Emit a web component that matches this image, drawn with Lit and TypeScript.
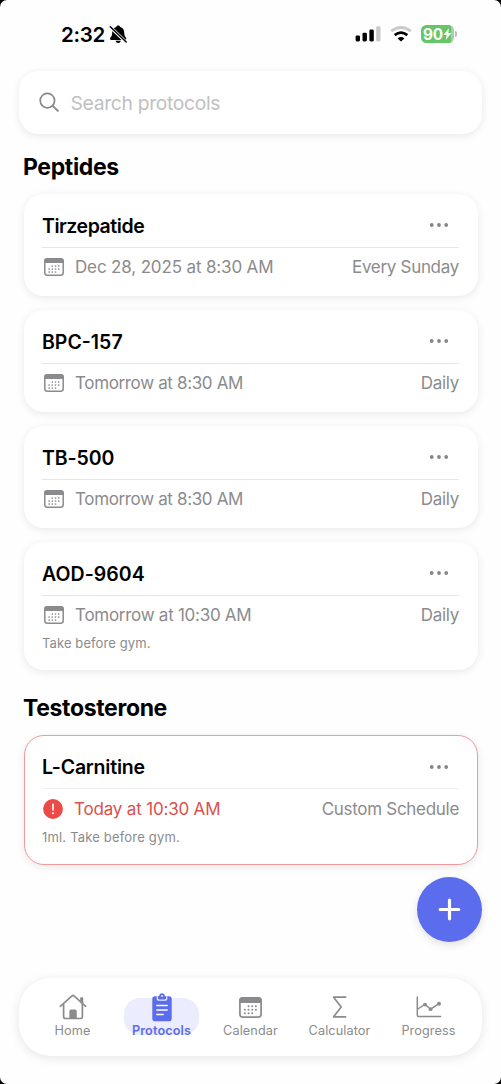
import { LitElement, html, svg, css, nothing } from "lit";
import { customElement, property } from "lit/decorators.js";
import { styleMap } from "lit/directives/style-map.js";

type Protocol = {
  name: string;
  when: string;
  repeat: string;
  note?: string;
  overdue?: boolean;
  // Letter tracking in px for the name and the date.
  tracking: [number, number];
};

const sections: { title: string; items: Protocol[] }[] = [
  {
    title: "Peptides",
    items: [
      { name: "Tirzepatide", when: "Dec 28, 2025 at 8:30 AM", repeat: "Every Sunday", tracking: [-0.45, -0.15] },
      { name: "BPC-157", when: "Tomorrow at 8:30 AM", repeat: "Daily", tracking: [0, -0.35] },
      { name: "TB-500", when: "Tomorrow at 8:30 AM", repeat: "Daily", tracking: [-0.1, -0.35] },
      { name: "AOD-9604", when: "Tomorrow at 10:30 AM", repeat: "Daily", note: "Take before gym.", tracking: [0.05, -0.27] },
    ],
  },
  {
    title: "Testosterone",
    items: [
      {
        name: "L-Carnitine",
        when: "Today at 10:30 AM",
        repeat: "Custom Schedule",
        note: "1ml. Take before gym.",
        overdue: true,
        tracking: [-0.2, -0.18],
      },
    ],
  },
];

const calendarDots = [
  [8.3, 8], [11.5, 8], [14.7, 8],
  [5.1, 11], [8.3, 11], [11.5, 11], [14.7, 11],
  [5.1, 14], [8.3, 14], [11.5, 14],
];

const calendarIcon = (width: number, height: number) => html`
  <svg width=${width} height=${height} viewBox="0 0 20 18" preserveAspectRatio="none" fill="none">
    <rect x="0.8" y="0.8" width="18.4" height="16.4" rx="2.4" stroke="currentColor" stroke-width="1.5" />
    <path d="M0.3 5.1V3A2.8 2.8 0 0 1 3.1 0.2H16.9A2.8 2.8 0 0 1 19.7 3V5.1Z" fill="currentColor" />
    ${calendarDots.map(([x, y]) => svg`<circle cx=${x} cy=${y} r="0.85" fill="currentColor" />`)}
  </svg>
`;

const alertIcon = html`
  <svg width="20" height="20" viewBox="0 0 20 20">
    <circle cx="10" cy="10" r="9.9" fill="#ea4a48" />
    <path d="M10 5.4V10.9" stroke="#fff" stroke-width="1.6" stroke-linecap="round" />
    <circle cx="10" cy="14.2" r="1" fill="#fff" />
  </svg>
`;

const homeIcon = html`
  <svg width="28" height="26" viewBox="0 0 28 26" fill="none" stroke="currentColor" stroke-width="1.7" stroke-linecap="round" stroke-linejoin="round">
    <path d="M1.3 12.3L13 1.9Q14 1.1 15 1.9L26.7 12.3" />
    <path d="M4.6 10.2V22.4Q4.6 24.5 6.7 24.5H21.3Q23.4 24.5 23.4 22.4V10.2" />
    <path d="M22 7.6V4H23.4V8.8" />
    <path d="M11.2 24V17.2Q11.2 16.4 12 16.4H16.1Q16.9 16.4 16.9 17.2V24Z" fill="currentColor" />
  </svg>
`;

const clipboardIcon = html`
  <svg width="20" height="29" viewBox="0 0 20 29" fill="none">
    <path d="M3 3.2H17Q19.7 3.2 19.7 5.9V25.4Q19.7 28.2 17 28.2H3Q0.3 28.2 0.3 25.4V5.9Q0.3 3.2 3 3.2Z" fill="#5b6cec" />
    <path d="M4.7 3.2V6.1Q4.7 7.7 6.3 7.7H13.7Q15.3 7.7 15.3 6.1V3.2Z" fill="#ebecfd" />
    <path d="M5.9 3.3H7.1Q7.4 0.3 10 0.3T12.9 3.3H14.1V5.3Q14.1 6.4 13 6.4H7Q5.9 6.4 5.9 5.3Z" fill="#5b6cec" />
    <circle cx="10" cy="2.9" r="1" fill="#ebecfd" />
    <path d="M4.8 12.6H15.2M4.8 17.1H15.2M4.8 21.4H11.2" stroke="#fff" stroke-width="1.5" stroke-linecap="round" />
  </svg>
`;

const sigmaIcon = html`
  <svg width="15" height="22" viewBox="0 0 15 22" fill="none" stroke="currentColor" stroke-width="1.7" stroke-linecap="round" stroke-linejoin="round">
    <path d="M13.6 1.2H1.6L9.2 11L1.6 20.8H13.6" />
  </svg>
`;

const chartIcon = html`
  <svg width="26" height="22" viewBox="0 0 26 22" fill="none" stroke="currentColor" stroke-linecap="round" stroke-linejoin="round">
    <path d="M1.3 1V19.2Q1.3 20.6 2.7 20.6H24.6" stroke-width="1.5" />
    <path d="M1.8 13L9 8.4L14.6 13.2L23.1 7.6" stroke-width="1.4" />
    <g fill="currentColor" stroke="none">
      <circle cx="9" cy="8.6" r="1.9" />
      <circle cx="14.6" cy="13.2" r="1.9" />
      <circle cx="23" cy="7.7" r="2" />
    </g>
  </svg>
`;

const tabs = [
  { label: "Home", icon: homeIcon, active: false },
  { label: "Protocols", icon: clipboardIcon, active: true },
  { label: "Calendar", icon: calendarIcon(23, 21), active: false },
  { label: "Calculator", icon: sigmaIcon, active: false },
  { label: "Progress", icon: chartIcon, active: false },
];

@customElement("status-bar")
class StatusBar extends LitElement {
  static styles = css`
    :host {
      display: flex;
      align-items: center;
      height: 68px;
      padding: 0 44px 0 61px;
    }
    svg { display: block; flex: none; }
    .time { font-size: 20.5px; font-weight: 600; letter-spacing: -0.25px; width: 47.5px; white-space: nowrap; }
    .levels { display: flex; align-items: center; margin-left: auto; }
    .wifi { margin: 0 9px 0 9px; }
    .battery {
      display: flex;
      align-items: center;
      justify-content: center;
      width: 33px;
      height: 18px;
      border-radius: 5.5px;
      background: linear-gradient(90deg, #66c566 90%, #a5cfa6 90%);
      color: #fff;
      font-size: 15.3px;
      font-weight: 700;
    }
    .tip { width: 2px; height: 6px; border-radius: 0 2px 2px 0; background: #b9b9bb; margin-left: 1px; }
  `;
  render() {
    return html`
      <span class="time">2:32</span>
      <svg width="19" height="19" viewBox="0 0 19 19">
        <path d="M9.2 0.5C10.3 0.5 11 1.2 11.1 2.1C13.9 2.9 15.1 5 15.2 7.5C15.3 10.4 15.8 11.4 17 12.7C17.7 13.7 17.2 14.9 16.1 14.9H2.2C1.1 14.9 0.7 13.6 1.4 12.7C2.6 11.4 3.1 10.4 3.2 7.5C3.3 5 4.5 2.9 7.3 2.1C7.4 1.2 8.1 0.5 9.2 0.5Z" fill="#000" />
        <path d="M6.5 15.8H11.8C11.4 17.3 10.5 18 9.2 18S6.9 17.3 6.5 15.8Z" fill="#000" />
        <path d="M0.9 1.7L17 17.2" stroke="#fff" stroke-width="3.2" />
        <path d="M1.3 1.7L17.2 17" stroke="#000" stroke-width="1.5" stroke-linecap="round" />
      </svg>
      <div class="levels">
        <svg width="26" height="16" viewBox="0 0 26 16">
          <rect x="0.6" y="9.4" width="4.4" height="6" rx="1.3" />
          <rect x="7.5" y="6.8" width="4.4" height="8.6" rx="1.3" />
          <rect x="14.4" y="3.6" width="4.4" height="11.8" rx="1.3" />
          <rect x="21.2" y="0.3" width="4.3" height="15.1" rx="1.3" fill="#c9c9c9" />
        </svg>
        <svg class="wifi" width="22" height="16" viewBox="0 0 22 16" fill="none" stroke-width="2.7">
          <path d="M1.2 5.2Q11 -2.2 20.8 5.2" stroke="#c9c9c9" />
          <path d="M4.7 9.1Q11 4.1 17.3 9.1" stroke="#000" />
          <path d="M11 15.6L7.6 12.4Q11 9.7 14.4 12.4Z" fill="#000" />
        </svg>
        <div class="battery">
          <span>90</span>
          <svg width="9" height="12" viewBox="0 0 9 12"><path d="M6.1 0L0.4 6.9H3.7L2.7 12L8.7 4.9H5.3Z" fill="#fff" /></svg>
        </div>
        <span class="tip"></span>
      </div>
    `;
  }
}

@customElement("protocol-card")
class ProtocolCard extends LitElement {
  @property({ attribute: false }) item!: Protocol;

  static styles = css`
    :host { display: block; }
    svg { display: block; flex: none; }
    .card {
      box-sizing: border-box;
      height: 102px;
      padding: 10px 18.5px 0;
      border-radius: 20px;
      background: #fff;
      box-shadow: 0 2px 8px rgba(0, 0, 0, 0.085);
    }
    .card.noted { height: 128px; }
    .card.overdue {
      height: 130px;
      margin: -1px 0;
      padding: 10px 17.5px 0;
      border: 1px solid #ee9a9f;
    }
    .head {
      display: flex;
      align-items: center;
      justify-content: space-between;
      height: 43px;
      border-bottom: 1px solid #e6e6e8;
      padding-right: 10px;
    }
    .head svg { margin-top: -1px; }
    .name { font-size: 19.5px; font-weight: 600; color: #000; white-space: nowrap; }
    .overdue .head { height: 42px; border-bottom-color: #eeeeef; }
    .row {
      display: flex;
      align-items: center;
      height: 38px;
      color: #8b8b8d;
      font-size: 17px;
      white-space: nowrap;
    }
    .overdue .row { height: 40px; }
    .row svg { margin: 0 11px 0 2px; }
    .overdue .row svg { margin: 0 11px 0 1px; }
    .overdue .when { color: #dc4f4b; }
    .repeat { margin-left: auto; letter-spacing: -0.3px; }
    .note { margin-top: 1px; font-size: 13px; line-height: 16px; color: #8b8b8d; letter-spacing: 0.1px; }
    .overdue .note { margin-top: 0; letter-spacing: 0.18px; }
  `;
  render() {
    const { name, when, repeat, note, overdue, tracking } = this.item;
    return html`
      <article class="card ${note ? "noted" : ""} ${overdue ? "overdue" : ""}">
        <div class="head">
          <span class="name" style=${styleMap({ letterSpacing: `${tracking[0]}px` })}>${name}</span>
          <svg width="20" height="4" viewBox="0 0 20 4" fill="#858587">
            <circle cx="2.7" cy="2" r="1.9" /><circle cx="10" cy="2" r="1.9" /><circle cx="17.2" cy="2" r="1.9" />
          </svg>
        </div>
        <div class="row">
          ${overdue ? alertIcon : calendarIcon(20, 18)}
          <span class="when" style=${styleMap({ letterSpacing: `${tracking[1]}px` })}>${when}</span>
          <span class="repeat">${repeat}</span>
        </div>
        ${note ? html`<div class="note">${note}</div>` : nothing}
      </article>
    `;
  }
}

@customElement("tab-bar")
class TabBar extends LitElement {
  static styles = css`
    :host {
      box-sizing: border-box;
      display: grid;
      grid-template-columns: repeat(5, 89px);
      justify-content: center;
      height: 78px;
      margin: 0 19px 28px;
      border-radius: 32px;
      background: #fff;
      box-shadow: 0 2px 11px rgba(0, 0, 0, 0.1);
    }
    svg { display: block; }
    .tab {
      display: flex;
      flex-direction: column;
      align-items: center;
      padding-top: 14px;
      color: #8b8b8d;
      font-size: 12.7px;
      letter-spacing: 0.1px;
      line-height: 16px;
    }
    .pill {
      display: flex;
      flex-direction: column;
      align-items: center;
      box-sizing: border-box;
      width: 75px;
      height: 37px;
      margin-top: 6px;
      border-radius: 16px;
    }
    .icon { display: grid; place-items: center; flex: none; height: 30px; margin-top: -6px; }
    .label { margin-top: 1px; }
    .active { color: #5b6cec; font-weight: 600; }
    .active .pill { background: #ebecfd; }
  `;
  render() {
    return html`${tabs.map(
      (t) => html`
        <div class="tab ${t.active ? "active" : ""}">
          <div class="pill">
            <span class="icon">${t.icon}</span>
            <span class="label">${t.label}</span>
          </div>
        </div>
      `
    )}`;
  }
}

@customElement("app-root")
class AppRoot extends LitElement {
  static styles = css`
    :host {
      display: block;
      height: 1084px;
      background: #000;
      font-family: Inter, "Liberation Sans", sans-serif;
    }
    svg { display: block; }
    .screen {
      position: relative;
      display: flex;
      flex-direction: column;
      height: 100%;
      overflow: hidden;
      border-radius: 7px;
      background: #fefefe;
      color: #000;
    }
    .search {
      display: flex;
      align-items: center;
      gap: 10.5px;
      flex: none;
      height: 63px;
      margin: 3px 19px 0;
      padding-left: 20px;
      box-sizing: border-box;
      border-radius: 20px;
      background: #fff;
      box-shadow: 0 2px 8px rgba(0, 0, 0, 0.085);
      color: #c0c0c2;
      font-size: 19.3px;
      letter-spacing: -0.32px;
    }
    main { flex: 1; padding: 0 23.5px; }
    .title { margin: 0 0 0 -0.5px; font-size: 23px; line-height: 28px; font-weight: 700; letter-spacing: -0.35px; }
    .group { padding-top: 19px; }
    .group + .group { padding-top: 24px; }
    .list { display: grid; gap: 14px; padding-top: 13px; }
    .group + .group .list { padding-top: 14px; }
    .fab {
      position: absolute;
      right: 19px;
      bottom: 142px;
      display: grid;
      place-items: center;
      width: 65px;
      height: 65px;
      border-radius: 50%;
      background: #5b6cec;
      box-shadow: 0 3px 9px rgba(0, 0, 0, 0.12);
    }
  `;
  render() {
    return html`
      <div class="screen">
        <status-bar></status-bar>
        <div class="search">
          <svg width="21" height="21" viewBox="0 0 21 21" fill="none" stroke="#88888a" stroke-linecap="round">
            <circle cx="8.4" cy="8.6" r="7.2" stroke-width="1.7" />
            <path d="M13.7 13.9L18.9 18.9" stroke-width="2" />
          </svg>
          <span>Search protocols</span>
        </div>
        <main>
          ${sections.map(
            (s) => html`
              <section class="group">
                <h2 class="title">${s.title}</h2>
                <div class="list">${s.items.map((i) => html`<protocol-card .item=${i}></protocol-card>`)}</div>
              </section>
            `
          )}
        </main>
        <tab-bar></tab-bar>
        <div class="fab">
          <svg width="23" height="23" viewBox="0 0 23 23" stroke="#fff" stroke-width="3.2" stroke-linecap="round">
            <path d="M11.5 2.2V20.8M2.2 11.5H20.8" />
          </svg>
        </div>
      </div>
    `;
  }
}
